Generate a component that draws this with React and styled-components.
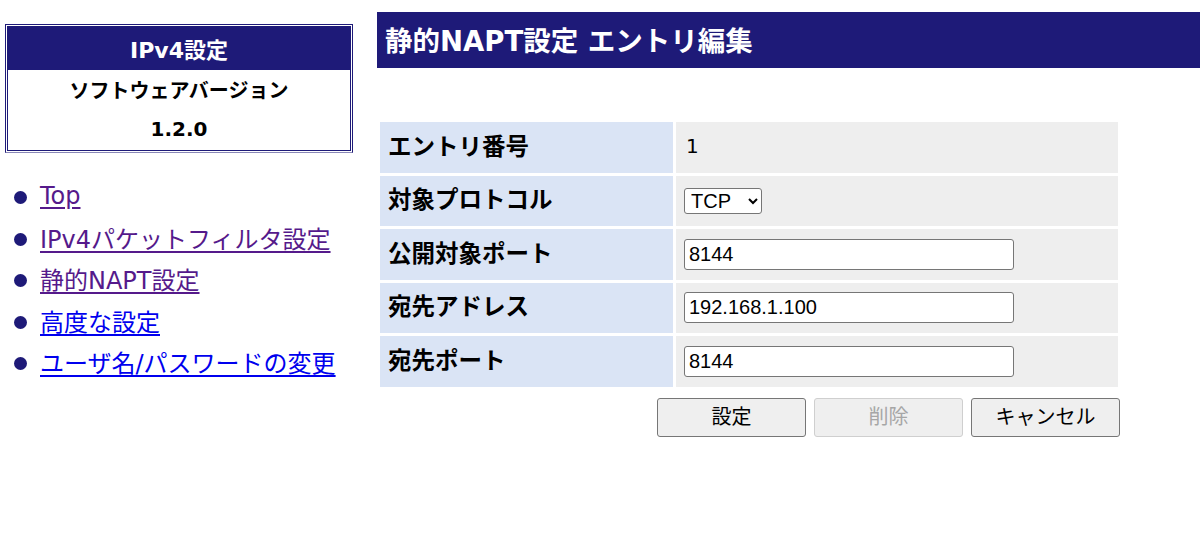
import React from 'react'
import styled, { createGlobalStyle } from 'styled-components'

const navy = '#1e1a78'
const uiFont = '"DejaVu Sans", "Noto Sans CJK JP", sans-serif'

const GlobalStyle = createGlobalStyle`
    html, body {
        margin: 0;
        padding: 0;
        background: #ffffff;
        font-family: ${uiFont};
        color: #000;
    }
`

const Page = styled.div`
    display: flex;
    align-items: flex-start;
    width: 1200px;
    height: 540px;
    overflow: hidden;
`

const Side = styled.div`
    width: 348px;
    margin: 24px 0 0 5px;
    flex-shrink: 0;
`

const InfoBox = styled.div`
    border: 1px solid ${navy};
    padding: 1px;
    border-bottom-color: #8a88b8;
`

const InfoHead = styled.div`
    background: ${navy};
    color: #fff;
    height: 44px;
    display: flex;
    align-items: center;
    justify-content: center;
    font-weight: 700;
    font-size: 22px;
`

const InfoBody = styled.div`
    border: 1px solid ${navy};
    border-top: none;
    padding: 0 0 2px;
    .row {
        height: 39px;
        display: flex;
        align-items: center;
        justify-content: center;
        font-weight: 700;
        font-size: 20px;
    }
`

const Nav = styled.ul`
    list-style: none;
    margin: 22px 0 0;
    padding: 0;
    li {
        display: flex;
        align-items: center;
        height: 41.5px;
        font-size: 24px;
        &::before {
            content: "";
            width: 13px;
            height: 13px;
            border-radius: 50%;
            background: ${navy};
            margin: 4px 13px 0 9px;
            flex-shrink: 0;
        }
    }
`

const NavLink = styled.a`
    color: ${props => (props.$visited ? '#551a8b' : '#0000ee')};
    text-decoration: underline;
    text-underline-offset: 3px;
    cursor: pointer;
`

const Main = styled.div`
    margin: 12px 0 0 24px;
    flex: 1;
`

const Title = styled.h1`
    margin: 0;
    height: 56px;
    background: ${navy};
    color: #fff;
    font-size: 27.5px;
    font-weight: 700;
    display: flex;
    align-items: center;
    padding: 0 0 3px 8px;
    box-sizing: border-box;
`

const Form = styled.div`
    margin: 54px 0 0 3px;
    width: 740px;
`

const Grid = styled.div`
    display: grid;
    grid-template-columns: 293px 442px;
    grid-auto-rows: 50.5px;
    gap: 3px;
`

const Label = styled.div`
    background: #dae4f5;
    font-weight: 700;
    font-size: 23.5px;
    display: flex;
    align-items: center;
    padding: 0 0 5px 8px;
`

const Value = styled.div`
    background: #eeeeee;
    display: flex;
    align-items: center;
    padding-left: 8px;
    font-size: 20px;
    font-family: "Liberation Sans", Arial, sans-serif;
`

const Plain = styled.span`
    font-family: ${uiFont};
    font-size: 20px;
    padding: 0 0 3px 2px;
`

const Select = styled.select`
    height: 26px;
    width: 78px;
    font-size: 20px;
    font-family: "Liberation Sans", Arial, sans-serif;
    border: 1px solid #767676;
    border-radius: 3px;
    background: #fff;
    padding: 0 0 0 2px;
    color: #000;
`

const Input = styled.input`
    width: 330px;
    height: 31px;
    box-sizing: border-box;
    border: 1px solid #767676;
    border-radius: 3px;
    padding: 0 4px;
    font-size: 20px;
    font-family: "Liberation Sans", Arial, sans-serif;
    color: #000;
`

const Actions = styled.div`
    display: flex;
    justify-content: flex-end;
    gap: 8px;
    margin-top: 11px;
`

const Button = styled.button`
    width: 149px;
    height: 39px;
    border: 1px solid ${props => (props.disabled ? '#cfcfcf' : '#767676')};
    border-radius: 3px;
    background: #efefef;
    color: ${props => (props.disabled ? '#a6a6a6' : '#000')};
    font-size: 20px;
    font-family: "Noto Sans CJK JP", sans-serif;
    padding: 0 0 3px;
`

const links = [
    { text: 'Top', visited: true },
    { text: 'IPv4パケットフィルタ設定', visited: true },
    { text: '静的NAPT設定', visited: true },
    { text: '高度な設定', visited: false },
    { text: 'ユーザ名/パスワードの変更', visited: false },
]

export default function App() {
    return (
        <Page>
            <GlobalStyle />
            <Side>
                <InfoBox>
                    <InfoHead>IPv4設定</InfoHead>
                    <InfoBody>
                        <div className="row">ソフトウェアバージョン</div>
                        <div className="row">1.2.0</div>
                    </InfoBody>
                </InfoBox>
                <Nav>
                    {links.map(link => (
                        <li key={link.text}>
                            <NavLink $visited={link.visited}>{link.text}</NavLink>
                        </li>
                    ))}
                </Nav>
            </Side>
            <Main>
                <Title>静的NAPT設定 エントリ編集</Title>
                <Form>
                    <Grid>
                        <Label>エントリ番号</Label>
                        <Value><Plain>1</Plain></Value>
                        <Label>対象プロトコル</Label>
                        <Value>
                            <Select defaultValue="TCP">
                                <option>TCP</option>
                                <option>UDP</option>
                            </Select>
                        </Value>
                        <Label>公開対象ポート</Label>
                        <Value><Input defaultValue="8144" /></Value>
                        <Label>宛先アドレス</Label>
                        <Value><Input defaultValue="192.168.1.100" /></Value>
                        <Label>宛先ポート</Label>
                        <Value><Input defaultValue="8144" /></Value>
                    </Grid>
                    <Actions>
                        <Button>設定</Button>
                        <Button disabled>削除</Button>
                        <Button>キャンセル</Button>
                    </Actions>
                </Form>
            </Main>
        </Page>
    )
}
